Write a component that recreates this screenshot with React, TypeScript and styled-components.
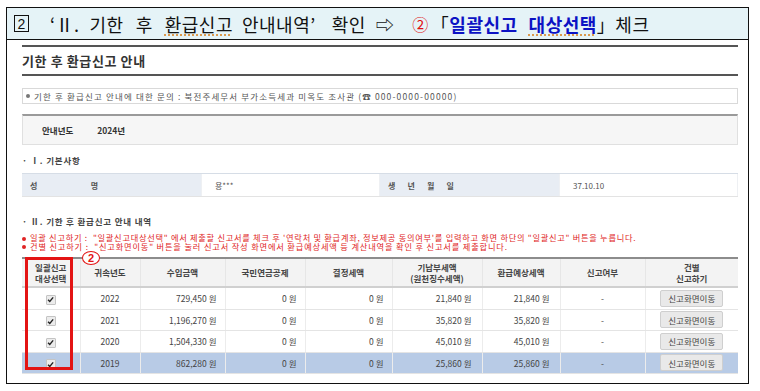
import React from 'react';
import styled, { createGlobalStyle } from 'styled-components';

const GlobalStyle = createGlobalStyle`
  body {
    margin: 0;
    background: #fff;
    font-family: 'Noto Sans CJK KR', 'Noto Sans', sans-serif;
    color: #333;
  }
`;

const Frame = styled.div`
  margin: 7px 0 0 6px;
  width: 743px;
  height: 377px;
  border: 1.5px solid #111;
  box-sizing: border-box;
  overflow: hidden;
`;

const HeaderBar = styled.div`
  height: 31px;
  background: #e5f3f7;
  border-bottom: 1.5px solid #111;
  display: flex;
  align-items: center;
  padding-left: 7px;
  font-family: 'Noto Sans CJK KR', sans-serif;
  font-size: 18px;
  letter-spacing: 0.5px;
  color: #111;
  white-space: nowrap;
`;

const StepBox = styled.span`
  display: inline-flex;
  align-items: center;
  justify-content: center;
  width: 13px;
  height: 15px;
  border: 1px solid #111;
  font-family: 'Liberation Sans', sans-serif;
  font-size: 14px;
  letter-spacing: 0;
  line-height: 1;
  margin-right: 21px;
`;

const Word = styled.span<{ gap?: number }>`
  margin-right: ${({ gap }) => gap ?? 12}px;
`;

const Squiggle = styled.span`
  text-decoration: underline dotted #d9903a;
  text-underline-offset: 3px;
`;

const Accent = styled.span`
  color: #0c12c4;
  font-weight: 700;
`;

const Bracket = styled.span`
  color: #111;
  font-weight: 400;
`;

const RedMark = styled.span`
  color: #e01010;
  font-size: 16px;
  margin-right: 2px;
`;

const Content = styled.div`
  padding: 0 10px 0 15px;
`;

const Rule = styled.div<{ top: number }>`
  margin-top: ${({ top }) => top}px;
  border-top: 2px solid #555;
`;

const PageTitle = styled.div`
  height: 27px;
  display: flex;
  align-items: center;
  font-size: 13px;
  font-weight: 700;
  color: #333;
  letter-spacing: 0.6px;
`;

const InfoBox = styled.div`
  margin-top: 12px;
  height: 16px;
  border: 1px solid #d9d9d9;
  box-sizing: border-box;
  display: flex;
  align-items: center;
  padding-left: 3px;
  font-size: 8.5px;
  color: #555;
  letter-spacing: 1.15px;
  white-space: nowrap;
`;

const Bullet = styled.span<{ color: string }>`
  display: inline-block;
  width: 4px;
  height: 4px;
  border-radius: 50%;
  background: ${({ color }) => color};
  margin-right: 4px;
  vertical-align: middle;
  flex-shrink: 0;
`;

const YearBox = styled.div`
  margin-top: 10px;
  height: 31px;
  background: #f6f6f6;
  border: 1px solid #e0e0e0;
  border-top: 2px solid #9a9a9a;
  box-sizing: border-box;
  display: flex;
  align-items: center;
  padding-left: 19px;
  gap: 24px;
  font-size: 8.5px;
  font-weight: 700;
  color: #333;
`;

const SectionTitle = styled.div<{ top: number }>`
  margin-top: ${({ top }) => top}px;
  height: 13px;
  display: flex;
  align-items: center;
  font-size: 8.5px;
  font-weight: 700;
  color: #444;
  letter-spacing: 0.8px;
`;

const InfoGrid = styled.div`
  margin-top: 7px;
  display: grid;
  grid-template-columns: 180px 178px 180px 1fr;
  height: 22px;
  border-top: 1px solid #d6dde6;
  border-bottom: 1px solid #e3e3e3;
`;

const InfoCell = styled.div<{ label?: boolean }>`
  display: flex;
  align-items: center;
  padding-left: ${({ label }) => (label ? 8 : 13)}px;
  background: ${({ label }) => (label ? '#e8edf4' : '#fff')};
  font-size: 8px;
  font-weight: ${({ label }) => (label ? 700 : 400)};
  color: #555;
  border-right: 1px solid #eef0f3;
`;

const Spread = styled.span<{ w: number }>`
  display: inline-flex;
  justify-content: space-between;
  width: ${({ w }) => w}px;
`;

const Notes = styled.div`
  margin-top: 6px;
  font-size: 8.2px;
  line-height: 8.5px;
  color: #e02424;
  white-space: nowrap;
`;

const NoteLine = styled.div<{ spacing: number }>`
  height: 8.5px;
  letter-spacing: ${({ spacing }) => spacing}px;
`;

const TableWrap = styled.div`
  position: relative;
  margin-top: 7px;
`;

const Table = styled.table`
  width: 716px;
  border-collapse: collapse;
  table-layout: fixed;
  border-top: 2px solid #8c8c8c;
  font-size: 8.5px;
  color: #444;
`;

const Th = styled.th`
  height: 25px;
  background: #f3f3f3;
  font-weight: 700;
  color: #444;
  line-height: 11px;
  border-bottom: 2px solid #d0d0d0;
  border-left: 1px solid #e6e6e6;
  &:first-child {
    border-left: none;
  }
`;

const Tr = styled.tr<{ highlight?: boolean }>`
  background: ${({ highlight }) => (highlight ? '#b8cbe6' : '#fff')};
`;

const Td = styled.td<{ align?: 'left' | 'center' | 'right'; pr?: number }>`
  height: 20.5px;
  text-align: ${({ align }) => align ?? 'center'};
  padding: 0 ${({ pr }) => pr ?? 0}px 0 0;
  border-bottom: 1px solid #e4e4e4;
  border-left: 1px solid #ececec;
  &:first-child {
    border-left: none;
  }
`;

const CheckMark = styled.span`
  display: inline-flex;
  align-items: center;
  justify-content: center;
  width: 8px;
  height: 8px;
  background: #ececec;
  border: 1px solid #c4c4c4;
  border-radius: 1px;
  vertical-align: middle;
`;

const MoveButton = styled.span`
  display: inline-flex;
  align-items: center;
  justify-content: center;
  width: 61px;
  height: 15px;
  background: #e9e9e9;
  border: 1px solid #cfcfcf;
  border-radius: 2px;
  font-size: 8.5px;
  color: #444;
`;

const HighlightBox = styled.div`
  position: absolute;
  left: 3px;
  top: 0;
  width: 48px;
  height: 113px;
  border: 3px solid #e31414;
  box-sizing: border-box;
  pointer-events: none;
`;

const CircleNum = styled.div`
  position: absolute;
  left: 60px;
  top: -6px;
  width: 16px;
  height: 12px;
  border: 1.5px solid #e31414;
  border-radius: 50%;
  display: flex;
  align-items: center;
  justify-content: center;
  font-family: 'Liberation Sans', sans-serif;
  font-size: 11px;
  font-weight: 700;
  color: #e31414;
  background: #fff;
`;

const rows = [
  { year: '2022', income: '729,450 원', paid: '21,840 원', refund: '21,840 원' },
  { year: '2021', income: '1,196,270 원', paid: '35,820 원', refund: '35,820 원' },
  { year: '2020', income: '1,504,330 원', paid: '45,010 원', refund: '45,010 원' },
  { year: '2019', income: '862,280 원', paid: '25,860 원', refund: '25,860 원' },
];

const colWidths = [58, 60, 85, 80, 87, 90, 78, 85, 93];

function Check() {
  return (
    <CheckMark>
      <svg width="7" height="7" viewBox="0 0 10 10">
        <path d="M1.5 5.2 L4 7.8 L8.8 2" fill="none" stroke="#222" strokeWidth="2" />
      </svg>
    </CheckMark>
  );
}

export default function App() {
  return (
    <>
      <GlobalStyle />
      <Frame>
        <HeaderBar>
          <StepBox>2</StepBox>
          <Word gap={10}>‘Ⅱ.</Word>
          <Word>기한</Word>
          <Word>후</Word>
          <Word gap={9}>
            <Squiggle>환급신고</Squiggle>
          </Word>
          <Word gap={16}>안내내역’</Word>
          <Word gap={10}>확인</Word>
          <Word gap={18}>⇨</Word>
          <RedMark>②</RedMark>
          <Accent>
            <Bracket>「</Bracket>
            <Word gap={11}>일괄신고</Word>
            <Squiggle>대상선택</Squiggle>
            <Bracket>」</Bracket>
          </Accent>
          <Word gap={0}>체크</Word>
        </HeaderBar>
        <Content>
          <Rule top={5} />
          <PageTitle>기한 후 환급신고 안내</PageTitle>
          <Rule top={0} />
          <InfoBox>
            <Bullet color="#777" />
            기한 후 환급신고 안내에 대한 문의 : 북전주세무서 부가소득세과 미옥도 조사관 (☎ 000-0000-00000)
          </InfoBox>
          <YearBox>
            <span>안내년도</span>
            <span>2024년</span>
          </YearBox>
          <SectionTitle top={8}>· Ⅰ. 기본사항</SectionTitle>
          <InfoGrid>
            <InfoCell label>
              <Spread w={68}>
                <span>성</span>
                <span>명</span>
              </Spread>
            </InfoCell>
            <InfoCell>용***</InfoCell>
            <InfoCell label>
              <Spread w={66}>
                <span>생</span>
                <span>년</span>
                <span>월</span>
                <span>일</span>
              </Spread>
            </InfoCell>
            <InfoCell>37.10.10</InfoCell>
          </InfoGrid>
          <SectionTitle top={17}>· Ⅱ. 기한 후 환급신고 안내 내역</SectionTitle>
          <Notes>
            <NoteLine spacing={0.74}>
              <Bullet color="#e02424" />
              일괄 신고하기 : &nbsp;"일괄신고대상선택" 에서 제출할 신고서를 체크 후 '연락처 및 환급계좌, 정보제공 동의여부'를 입력하고 화면 하단의 "일괄신고" 버튼을 누릅니다.
            </NoteLine>
            <NoteLine spacing={0.85}>
              <Bullet color="#e02424" />
              건별 신고하기 : &nbsp;"신고화면이동" 버튼을 눌러 신고서 작성 화면에서 환급예상세액 등 계산내역을 확인 후 신고서를 제출합니다.
            </NoteLine>
          </Notes>
          <TableWrap>
            <Table>
              <colgroup>
                {colWidths.map((w, i) => (
                  <col key={i} style={{ width: w }} />
                ))}
              </colgroup>
              <thead>
                <tr>
                  <Th>
                    일괄신고
                    <br />
                    대상선택
                  </Th>
                  <Th>귀속년도</Th>
                  <Th>수입금액</Th>
                  <Th>국민연금공제</Th>
                  <Th>결정세액</Th>
                  <Th>
                    기납부세액
                    <br />
                    (원천징수세액)
                  </Th>
                  <Th>환급예상세액</Th>
                  <Th>신고여부</Th>
                  <Th>
                    건별
                    <br />
                    신고하기
                  </Th>
                </tr>
              </thead>
              <tbody>
                {rows.map((r, i) => (
                  <Tr key={r.year} highlight={i === rows.length - 1}>
                    <Td>
                      <Check />
                    </Td>
                    <Td>{r.year}</Td>
                    <Td align="right" pr={8}>{r.income}</Td>
                    <Td align="right" pr={8}>0 원</Td>
                    <Td align="right" pr={8}>0 원</Td>
                    <Td align="right" pr={10}>{r.paid}</Td>
                    <Td align="right" pr={10}>{r.refund}</Td>
                    <Td>-</Td>
                    <Td>
                      <MoveButton>신고화면이동</MoveButton>
                    </Td>
                  </Tr>
                ))}
              </tbody>
            </Table>
            <HighlightBox />
            <CircleNum>2</CircleNum>
          </TableWrap>
        </Content>
      </Frame>
    </>
  );
}
